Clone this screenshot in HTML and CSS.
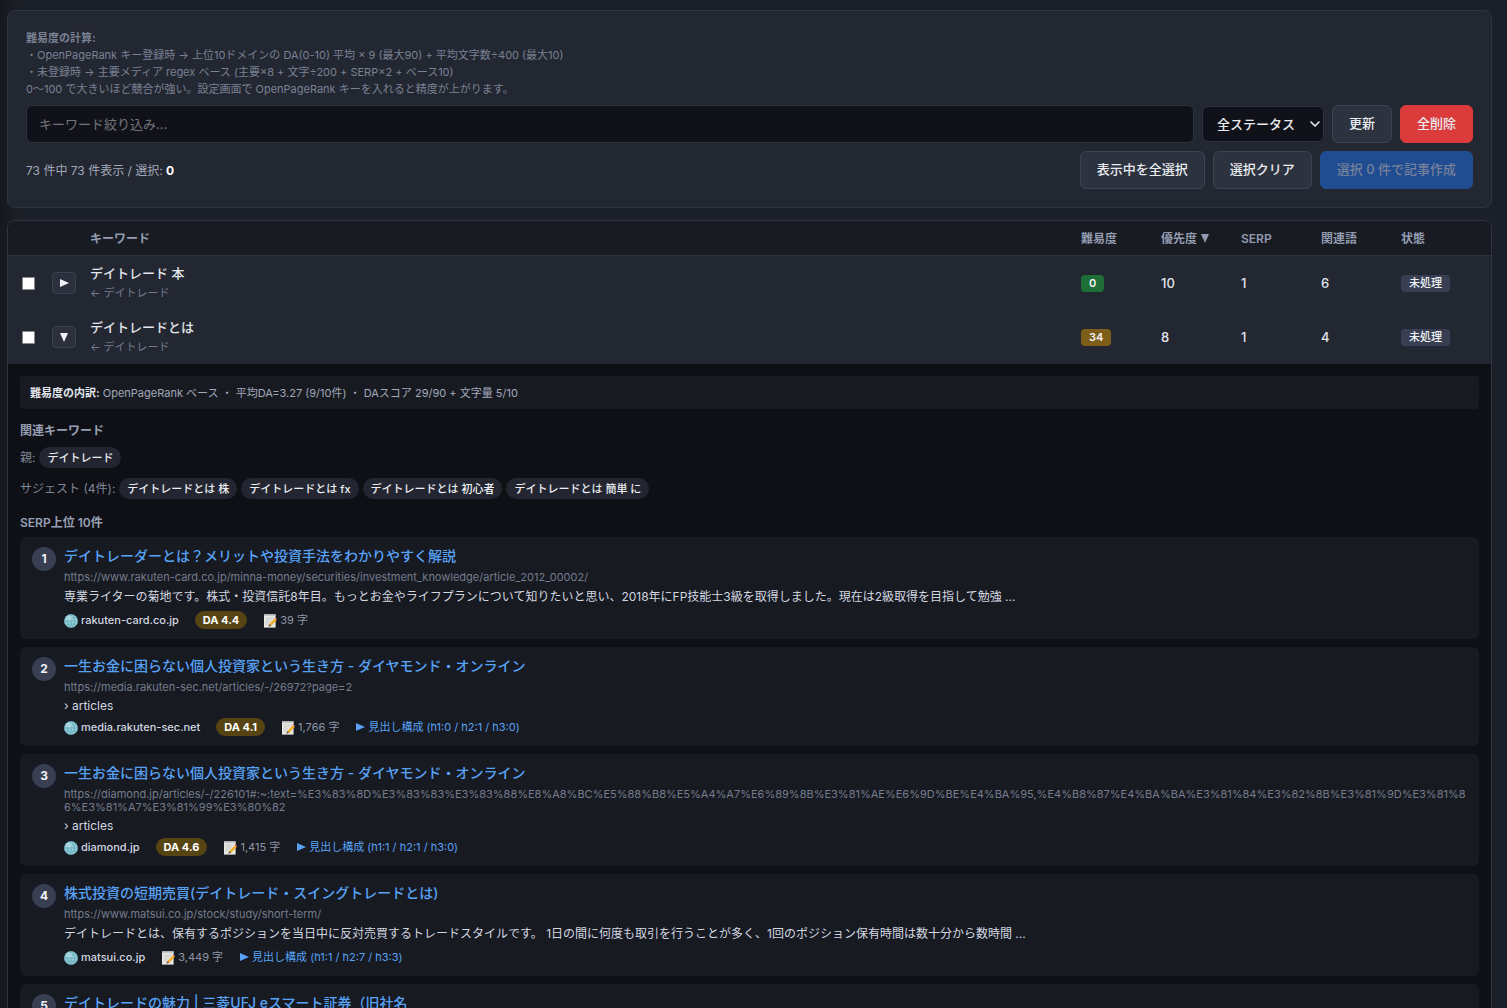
FILE: index.html
```html
<!DOCTYPE html>
<html lang="ja">
<head>
<meta charset="utf-8">
<meta name="viewport" content="width=device-width, initial-scale=1">
<title>キーワード一覧</title>
<link rel="stylesheet" href="styles.css">
</head>
<body>
<svg class="sprite" aria-hidden="true">
  <symbol id="globe" viewBox="0 0 14 14">
    <circle cx="7" cy="7" r="6.8" fill="#93cfda"/>
    <circle cx="7" cy="7" r="6.4" fill="none" stroke="#6db0c0" stroke-width=".6"/>
    <path d="M7 .6v12.8M.6 7h12.8M1.6 3.8h10.8M1.6 10.2h10.8" stroke="#5a9db2" stroke-width=".6" fill="none"/>
    <ellipse cx="7" cy="7" rx="3.4" ry="6.3" fill="none" stroke="#5a9db2" stroke-width=".6"/>
    <ellipse cx="5" cy="4" rx="3" ry="2.4" fill="#d8f2f4" opacity=".45"/>
  </symbol>
  <symbol id="memo" viewBox="0 0 14 14">
    <path d="M1 .4h11.6v13.2H1z" fill="#e9e9e4"/>
    <path d="M1 .4h11.6v1.6H1z" fill="#c4c6c6"/>
    <path d="M2.5 4h8M2.5 6h6M2.5 8h4.5M2.5 10h3" stroke="#b4b7ba" stroke-width=".6"/>
    <path d="M11.8 4.2l1.9 1.7-5.4 5.8-2-1.7z" fill="#f0ae2c"/>
    <path d="M11.8 4.2l.8-.8 1.4 1.5-.3 1z" fill="#e2776b"/>
    <path d="M6.3 10l2 1.7-3 1.1z" fill="#6b5335"/>
  </symbol>
</svg>
<main class="page">
  <section class="panel">
    <p class="note"><b>難易度の計算:</b><br>
    ・OpenPageRank キー登録時 → 上位10ドメインの DA(0-10) 平均 × 9 (最大90) + 平均文字数÷400 (最大10)<br>
    ・未登録時 → 主要メディア regex ベース (主要×8 + 文字÷200 + SERP×2 + ベース10)<br>
    0〜100 で大きいほど競合が強い。設定画面で OpenPageRank キーを入れると精度が上がります。</p>
    <div class="toolbar">
      <input class="search" type="text" placeholder="キーワード絞り込み..." aria-label="キーワード絞り込み">
      <div class="select-wrap">
        <select class="status-select" aria-label="ステータス"><option>全ステータス</option></select>
        <svg class="chevron" viewBox="0 0 10 6" aria-hidden="true"><path d="M1 1l4 4 4-4" fill="none" stroke="currentColor" stroke-width="1.6" stroke-linecap="round" stroke-linejoin="round"/></svg>
      </div>
      <button class="btn" type="button">更新</button>
      <button class="btn btn-danger" type="button">全削除</button>
    </div>
    <div class="toolbar">
      <p class="count">73 件中 73 件表示 / 選択: <b>0</b></p>
      <button class="btn" type="button">表示中を全選択</button>
      <button class="btn" type="button">選択クリア</button>
      <button class="btn btn-primary" type="button" disabled>選択 0 件で記事作成</button>
    </div>
  </section>

  <section class="table-card">
    <table class="keywords">
      <colgroup><col class="col-check"><col class="col-toggle"><col><col class="col-num"><col class="col-num"><col class="col-num"><col class="col-num"><col class="col-state"></colgroup>
      <thead>
        <tr><th></th><th></th><th>キーワード</th><th>難易度</th><th>優先度 <svg class="tri" viewBox="0 0 10 10" aria-hidden="true"><path d="M1 1h8L5 10z"/></svg></th><th>SERP</th><th>関連語</th><th>状態</th></tr>
      </thead>
      <tbody>
        <tr class="kw-row">
          <td class="cell-check"><input class="check" type="checkbox" aria-label="デイトレード 本"></td>
          <td class="cell-toggle"><button class="toggle" type="button" aria-label="開く"><svg class="tri" viewBox="0 0 10 10" aria-hidden="true"><path d="M1 1v8l9-4z"/></svg></button></td>
          <td><div class="kw">デイトレード 本</div><div class="kw-parent">← デイトレード</div></td>
          <td><span class="score score-easy">0</span></td><td>10</td><td>1</td><td>6</td>
          <td><span class="state">未処理</span></td>
        </tr>
        <tr class="kw-row">
          <td class="cell-check"><input class="check" type="checkbox" aria-label="デイトレードとは"></td>
          <td class="cell-toggle"><button class="toggle" type="button" aria-label="閉じる"><svg class="tri" viewBox="0 0 10 10" aria-hidden="true"><path d="M1 1h8L5 10z"/></svg></button></td>
          <td><div class="kw">デイトレードとは</div><div class="kw-parent">← デイトレード</div></td>
          <td><span class="score score-mid">34</span></td><td>8</td><td>1</td><td>4</td>
          <td><span class="state">未処理</span></td>
        </tr>
        <tr>
          <td class="detail" colspan="8">
            <p class="breakdown"><b>難易度の内訳:</b> OpenPageRank ベース ・ 平均DA=3.27 (9/10件) ・ DAスコア 29/90 + 文字量 5/10</p>
            <h4 class="heading">関連キーワード</h4>
            <div class="chips"><span class="chip-label">親:</span><span class="chip">デイトレード</span></div>
            <div class="chips"><span class="chip-label">サジェスト (4件):</span><span class="chip">デイトレードとは 株</span><span class="chip">デイトレードとは fx</span><span class="chip">デイトレードとは 初心者</span><span class="chip">デイトレードとは 簡単 に</span></div>
            <h4 class="heading heading-serp">SERP上位 10件</h4>
            <ol class="results">
              <li class="result">
                <span class="rank">1</span>
                <div class="body">
                  <a class="title" href="#">デイトレーダーとは？メリットや投資手法をわかりやすく解説</a>
                  <p class="url">https://www.rakuten-card.co.jp/minna-money/securities/investment_knowledge/article_2012_00002/</p>
                  <p class="snippet">専業ライターの菊地です。株式・投資信託8年目。もっとお金やライフプランについて知りたいと思い、2018年にFP技能士3級を取得しました。現在は2級取得を目指して勉強 ...</p>
                  <div class="meta"><span class="domain"><svg class="emoji"><use href="#globe"/></svg>rakuten-card.co.jp</span><span class="da">DA 4.4</span><span class="chars"><svg class="emoji"><use href="#memo"/></svg>39 字</span></div>
                </div>
              </li>
              <li class="result">
                <span class="rank">2</span>
                <div class="body">
                  <a class="title" href="#">一生お金に困らない個人投資家という生き方 - ダイヤモンド・オンライン</a>
                  <p class="url">https://media.rakuten-sec.net/articles/-/26972?page=2</p>
                  <p class="snippet snippet-path">› articles</p>
                  <div class="meta"><span class="domain"><svg class="emoji"><use href="#globe"/></svg>media.rakuten-sec.net</span><span class="da">DA 4.1</span><span class="chars"><svg class="emoji"><use href="#memo"/></svg>1,766 字</span><a class="outline" href="#"><svg class="tri" viewBox="0 0 10 10" aria-hidden="true"><path d="M1 1v8l9-4z"/></svg>見出し構成 (h1:0 / h2:1 / h3:0)</a></div>
                </div>
              </li>
              <li class="result">
                <span class="rank">3</span>
                <div class="body">
                  <a class="title" href="#">一生お金に困らない個人投資家という生き方 - ダイヤモンド・オンライン</a>
                  <p class="url">https://diamond.jp/articles/-/226101#:~:text=%E3%83%8D%E3%83%83%E3%83%88%E8%A8%BC%E5%88%B8%E5%A4%A7%E6%89%8B%E3%81%AE%E6%9D%BE%E4%BA%95,%E4%B8%87%E4%BA%BA%E3%81%84%E3%82%8B%E3%81%9D%E3%81%86%E3%81%A7%E3%81%99%E3%80%82</p>
                  <p class="snippet snippet-path">› articles</p>
                  <div class="meta"><span class="domain"><svg class="emoji"><use href="#globe"/></svg>diamond.jp</span><span class="da">DA 4.6</span><span class="chars"><svg class="emoji"><use href="#memo"/></svg>1,415 字</span><a class="outline" href="#"><svg class="tri" viewBox="0 0 10 10" aria-hidden="true"><path d="M1 1v8l9-4z"/></svg>見出し構成 (h1:1 / h2:1 / h3:0)</a></div>
                </div>
              </li>
              <li class="result">
                <span class="rank">4</span>
                <div class="body">
                  <a class="title" href="#">株式投資の短期売買(デイトレード・スイングトレードとは)</a>
                  <p class="url">https://www.matsui.co.jp/stock/study/short-term/</p>
                  <p class="snippet">デイトレードとは、保有するポジションを当日中に反対売買するトレードスタイルです。 1日の間に何度も取引を行うことが多く、1回のポジション保有時間は数十分から数時間 ...</p>
                  <div class="meta"><span class="domain"><svg class="emoji"><use href="#globe"/></svg>matsui.co.jp</span><span class="chars"><svg class="emoji"><use href="#memo"/></svg>3,449 字</span><a class="outline" href="#"><svg class="tri" viewBox="0 0 10 10" aria-hidden="true"><path d="M1 1v8l9-4z"/></svg>見出し構成 (h1:1 / h2:7 / h3:3)</a></div>
                </div>
              </li>
              <li class="result">
                <span class="rank">5</span>
                <div class="body">
                  <a class="title" href="#">デイトレードの魅力 | 三菱UFJ eスマート証券（旧社名</a>
                </div>
              </li>
            </ol>
          </td>
        </tr>
      </tbody>
    </table>
  </section>
</main>
</body>
</html>
```
FILE: styles.css
```css
* { box-sizing: border-box; }
html { background: #1b1f27; }
body {
  margin: 0;
  height: 100vh;
  overflow: hidden;
  background: linear-gradient(90deg, #16181f, #1b1f27 20px);
  color: #e2e5ec;
  font: 13px/18px Inter, "Noto Sans CJK JP", sans-serif;
}
p, h4, ol { margin: 0; padding: 0; }
a { text-decoration: none; }
.sprite { display: none; }
.page {
  display: flex;
  flex-direction: column;
  gap: 12px;
  padding: 10px 15px 0 7px;
}

.panel {
  padding: 19px 18px 18px;
  background: #232731;
  border: 1px solid #2d3442;
  border-radius: 8px;
}
.note { margin-bottom: 7px; color: #7a8194; font-size: 11px; line-height: 17px; }
.toolbar { display: flex; align-items: center; gap: 8px; }
.toolbar + .toolbar { margin-top: 8px; }
.search, .status-select, .btn { font: inherit; border: 1px solid #2b3240; border-radius: 6px; }
.search {
  flex: 1;
  min-width: 0;
  height: 38px;
  padding: 0 12px;
  background: #111219;
  color: #e2e5ec;
}
.search::placeholder { color: #72747a; opacity: 1; }
.select-wrap { position: relative; }
.status-select {
  appearance: none;
  display: block;
  width: 122px;
  height: 36px;
  padding: 0 24px 0 14px;
  background: #111219;
  color: #e9ebf0;
  font-weight: 500;
}
.chevron { position: absolute; right: 4px; top: 15px; width: 10px; height: 6px; color: #e9ebf0; pointer-events: none; }
.btn {
  height: 38px;
  padding: 0 16px 2px;
  background: #2c333f;
  border-color: #3b4356;
  color: #e9ebf0;
  font-weight: 500;
  white-space: nowrap;
}
.btn-danger { background: #db3b3b; border-color: #db3b3b; }
.btn-primary { background: #204c91; border-color: #204c91; color: #76819a; }
.count { flex: 1; padding-top: 2px; color: #a2a9ba; font-size: 12px; }
.count b { color: #fff; }

.table-card {
  border: 1px solid #2d3442;
  border-radius: 8px;
  overflow: hidden;
}
.keywords { width: 100%; table-layout: fixed; border-collapse: separate; border-spacing: 0; }
.col-check { width: 34px; }
.col-toggle { width: 38px; }
.col-num { width: 80px; }
.col-state { width: 100px; }
th {
  height: 35px;
  padding: 2px 10px 0;
  background: #181b22;
  border-bottom: 1px solid #2d323e;
  color: #939bb0;
  font-size: 12px;
  font-weight: 600;
  text-align: left;
  white-space: nowrap;
}
td { padding: 0 10px; }
.tri { width: 10px; height: 10px; fill: currentColor; }
.kw-row td { height: 54px; background: #232731; font-weight: 500; }
.kw-row .cell-check { padding: 0 0 0 14px; }
.kw-row .cell-toggle { padding: 0 0 0 10px; }
.check {
  appearance: none;
  display: block;
  width: 13px;
  height: 13px;
  margin: 0;
  background: #fff;
  border: 1px solid #8a8a8a;
  border-radius: 1px;
}
.toggle {
  display: flex;
  align-items: center;
  justify-content: center;
  width: 24px;
  height: 22px;
  padding: 0;
  background: #2b303c;
  border: 1px solid #394153;
  border-radius: 4px;
  color: #f0f2f6;
}
.kw { line-height: 20px; }
.kw-parent { color: #737a8c; font-size: 11px; font-weight: 400; line-height: 20px; }
.score, .state {
  display: inline-block;
  padding: 0 8px;
  border-radius: 4px;
  color: #f0f2f6;
  font-size: 11px;
  font-weight: 500;
  line-height: 17px;
  vertical-align: middle;
}
.score { font-weight: 600; }
.score-easy { background: #1f6e38; }
.score-mid { background: #7d5d17; }
.state { background: #383f52; }

.detail { padding: 12px; background: #0f1016; }
.breakdown {
  padding: 9px 10px 7px;
  background: #171a21;
  border-radius: 4px;
  color: #a2a9ba;
  font-size: 11px;
  line-height: 17px;
}
.breakdown b { color: #e2e5ec; }
.heading { margin: 13px 0 7px; color: #98a0b5; font-size: 12px; font-weight: 600; }
.heading-serp { margin: 15px 0 5px; }
.chips { display: flex; align-items: center; flex-wrap: wrap; gap: 4px; }
.chips + .chips { margin-top: 10px; }
.chip-label { color: #7f8799; font-size: 12px; }
.chip {
  padding: 1px 8px 0;
  background: #232630;
  border-radius: 11px;
  color: #eceef3;
  font-size: 11px;
  font-weight: 500;
  line-height: 20px;
}
.results { display: flex; flex-direction: column; gap: 8px; list-style: none; }
.result {
  display: flex;
  gap: 8px;
  padding: 10px 12px;
  background: #171a21;
  border-radius: 6px;
}
.rank {
  flex: none;
  width: 24px;
  height: 24px;
  background: #383f52;
  border-radius: 50%;
  color: #f0f2f6;
  font-size: 12px;
  font-weight: 700;
  line-height: 24px;
  text-align: center;
}
.body { flex: 1; min-width: 0; }
.title { display: block; color: #58a2f6; font-size: 14px; font-weight: 500; line-height: 18px; }
.url { margin-top: 6px; color: #757c8d; font-size: 11px; line-height: 13px; word-break: break-all; }
.snippet { margin-top: 4px; color: #d3d7e0; font-size: 12px; line-height: 18px; }
.snippet-path { line-height: 15px; }
.meta { display: flex; align-items: center; gap: 16px; margin-top: 5px; font-size: 11px; line-height: 18px; }
.domain, .chars, .outline { display: flex; align-items: center; gap: 3px; }
.domain, .chars { padding-top: 1px; line-height: 17px; }
.domain { color: #d3d7e0; font-weight: 500; }
.chars { color: #8f96a6; }
.outline { color: #58a2f6; }
.emoji { width: 14px; height: 14px; }
.da {
  padding: 0 8px;
  background: #574413;
  border-radius: 9px;
  color: #fff;
  font-weight: 700;
}
```
